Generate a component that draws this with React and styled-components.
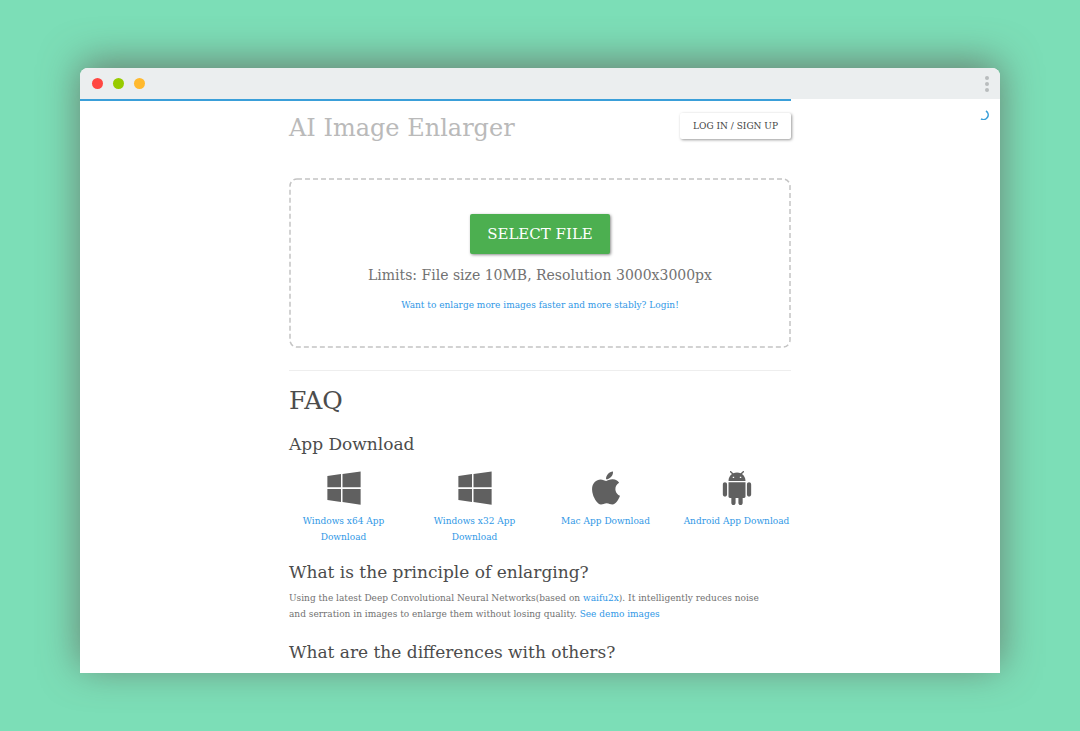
import React from "react";
import styled, { createGlobalStyle } from "styled-components";
import { FaApple, FaWindows } from "react-icons/fa";

const GlobalStyle = createGlobalStyle`
  * { box-sizing: border-box; }
  body {
    margin: 0;
    background: #7cdeb7;
    font-family: "DejaVu Serif", serif;
    font-size: 9px;
    line-height: 16px;
    color: #727272;
  }
`;

const Desktop = styled.div`
  height: 100vh;
  padding: 68px 80px 58px;
  display: flex;
  flex-direction: column;
`;

const Window = styled.div`
  flex: 1;
  min-height: 0;
  display: flex;
  flex-direction: column;
  overflow: hidden;
  background: #fff;
  border-radius: 8px 8px 0 0;
  box-shadow: 0 -6px 38px rgba(94, 84, 80, 0.68);
`;

const TitleBar = styled.div`
  flex: none;
  height: 31px;
  padding: 0 11px 0 12px;
  display: flex;
  align-items: center;
  justify-content: space-between;
  background: #ebeeef;
`;

const Lights = styled.div`
  display: flex;
  gap: 10px;
`;

const Light = styled.span`
  width: 11px;
  height: 11px;
  border-radius: 50%;
  background: ${(p) => p.$color};
`;

const MenuButton = styled.button`
  display: flex;
  flex-direction: column;
  gap: 2px;
  padding: 0;
  border: 0;
  background: none;
`;

const Dot = styled.span`
  width: 4px;
  height: 4px;
  border-radius: 50%;
  background: #b9bcbd;
`;

const Viewport = styled.div`
  position: relative;
  flex: 1;
  min-height: 0;
  overflow: hidden;
`;

const Progress = styled.div`
  position: absolute;
  top: 0;
  left: 0;
  right: 0;
  height: 2px;
  &::before {
    content: "";
    display: block;
    width: 77.3%;
    height: 2px;
    background: #3a9fd9;
  }
`;

const Spinner = styled.svg`
  position: absolute;
  top: 11px;
  right: 11px;
  width: 10px;
  height: 10px;
`;

const Page = styled.div`
  width: 55%;
  min-width: 502px;
  max-width: 1000px;
  margin: 0 auto;
  @media (max-width: 1100px) {
    width: 502px;
  }
`;

const Header = styled.header`
  display: flex;
  align-items: flex-start;
  justify-content: space-between;
  padding: 14px 0 0;
  height: 79px;
`;

const Brand = styled.h1`
  margin: 0;
  font-size: 24px;
  line-height: 30px;
  font-weight: 400;
  color: #bababa;
`;

const LoginButton = styled.button`
  padding: 0 13px;
  height: 26px;
  border: 0;
  border-radius: 2px;
  background: #fff;
  box-shadow: 1px 1px 3px rgba(0, 0, 0, 0.4);
  font: 9px/26px "DejaVu Serif", serif;
  color: #444;
`;

const DropZone = styled.section`
  display: flex;
  flex-direction: column;
  align-items: center;
  height: 170px;
  padding-top: 36px;
`;

const DropFrame = styled.div`
  position: relative;
`;

const Outline = styled.svg`
  position: absolute;
  inset: 0;
  width: 100%;
  height: 100%;
  pointer-events: none;
  rect {
    width: calc(100% - 2px);
    height: calc(100% - 2px);
    fill: none;
    stroke: #c4c4c4;
    stroke-width: 1.5;
    stroke-dasharray: 5 3;
  }
`;

const SelectButton = styled.button`
  height: 40px;
  padding: 0 17px;
  border: 0;
  border-radius: 2px;
  background: #4caf50;
  box-shadow: 1px 1px 3px rgba(0, 0, 0, 0.45);
  font: 15px/40px "DejaVu Serif", serif;
  color: #fff;
`;

const Limits = styled.p`
  margin: 11px 0 12px;
  font-size: 14px;
  line-height: 20px;
`;

const Link = styled.a`
  color: #3098e6;
  text-decoration: none;
`;

const Divider = styled.hr`
  margin: 22px 0 14px;
  border: 0;
  border-top: 1px solid #eee;
`;

const FaqTitle = styled.h2`
  margin: 0;
  font-size: 25px;
  line-height: 32px;
  font-weight: 400;
  color: #4c4c4c;
`;

const Question = styled.h3`
  margin: 15px 0 6px;
  font-size: 17px;
  line-height: 24px;
  font-weight: 400;
  color: #4c4c4c;
`;

const Downloads = styled.div`
  display: grid;
  grid-template-columns: repeat(4, 1fr);
  column-gap: 22px;
  padding-top: 7px;
`;

const Download = styled.a`
  display: flex;
  flex-direction: column;
  align-items: center;
  text-align: center;
  text-decoration: none;
  color: #3098e6;
  svg {
    height: 38px;
    color: #606060;
    margin-bottom: 6px;
  }
`;

const Answer = styled.p`
  margin: 0 0 18px;
  padding-right: 20px;
`;

function AndroidIcon({ size }) {
  return (
    <svg width={size} height={size} viewBox="0 0 24 24" fill="currentColor" aria-hidden="true">
      <path d="M6 18c0 .55.45 1 1 1h1v3.500c0 .83.67 1.500 1.500 1.500s1.500-.67 1.500-1.500V19h2v3.500c0 .83.67 1.500 1.500 1.500s1.500-.67 1.500-1.500V19h1c.55 0 1-.45 1-1V8H6v10zM3.500 8C2.670 8 2 8.670 2 9.500v7c0 .83.67 1.500 1.500 1.500S5 17.330 5 16.500v-7C5 8.670 4.330 8 3.500 8zm17 0c-.83 0-1.500.67-1.500 1.500v7c0 .83.67 1.500 1.500 1.500s1.500-.67 1.500-1.500v-7c0-.83-.67-1.500-1.500-1.500zm-4.970-5.840l1.300-1.300c.2-.2.2-.51 0-.71-.2-.2-.51-.2-.71 0l-1.480 1.480C13.850 1.230 12.950 1 12 1c-.96 0-1.860.23-2.660.63L7.850.15c-.2-.2-.51-.2-.71 0-.2.2-.2.51 0 .71l1.310 1.310C6.970 3.260 6 5.010 6 7h12c0-1.990-.97-3.750-2.470-4.840zM10 5H9V4h1v1zm5 0h-1V4h1v1z" />
    </svg>
  );
}

const downloads = [
  { label: "Windows x64 App Download", Icon: FaWindows, size: 38 },
  { label: "Windows x32 App Download", Icon: FaWindows, size: 38 },
  { label: "Mac App Download", Icon: FaApple, size: 38 },
  { label: "Android App Download", Icon: AndroidIcon, size: 34 },
];

export default function App() {
  return (
    <Desktop>
      <GlobalStyle />
      <Window>
        <TitleBar>
          <Lights>
            <Light $color="#ff4742" />
            <Light $color="#97cb00" />
            <Light $color="#ffb92e" />
          </Lights>
          <MenuButton aria-label="Menu">
            <Dot />
            <Dot />
            <Dot />
          </MenuButton>
        </TitleBar>
        <Viewport>
          <Progress />
          <Spinner viewBox="0 0 10 10" aria-hidden="true">
            <path d="M7 1A4.200 4.200 0 0 1 2 8.800" fill="none" stroke="#3a9fd9" strokeWidth="1.600" />
          </Spinner>
          <Page>
            <Header>
              <Brand>AI Image Enlarger</Brand>
              <LoginButton>LOG IN / SIGN UP</LoginButton>
            </Header>
            <DropFrame>
              <Outline aria-hidden="true">
                <rect x="1" y="1" rx="7" />
              </Outline>
              <DropZone>
                <SelectButton>SELECT FILE</SelectButton>
                <Limits>Limits: File size 10MB, Resolution 3000x3000px</Limits>
                <Link href="#login">Want to enlarge more images faster and more stably? Login!</Link>
              </DropZone>
            </DropFrame>
            <Divider />
            <FaqTitle>FAQ</FaqTitle>
            <Question>App Download</Question>
            <Downloads>
              {downloads.map(({ label, Icon, size }) => (
                <Download href="#download" key={label}>
                  <Icon size={size} />
                  {label}
                </Download>
              ))}
            </Downloads>
            <Question>What is the principle of enlarging?</Question>
            <Answer>
              Using the latest Deep Convolutional Neural Networks(based on <Link href="#waifu2x">waifu2x</Link>). It
              intelligently reduces noise and serration in images to enlarge them without losing quality.{" "}
              <Link href="#demo">See demo images</Link>
            </Answer>
            <Question>What are the differences with others?</Question>
          </Page>
        </Viewport>
      </Window>
    </Desktop>
  );
}
